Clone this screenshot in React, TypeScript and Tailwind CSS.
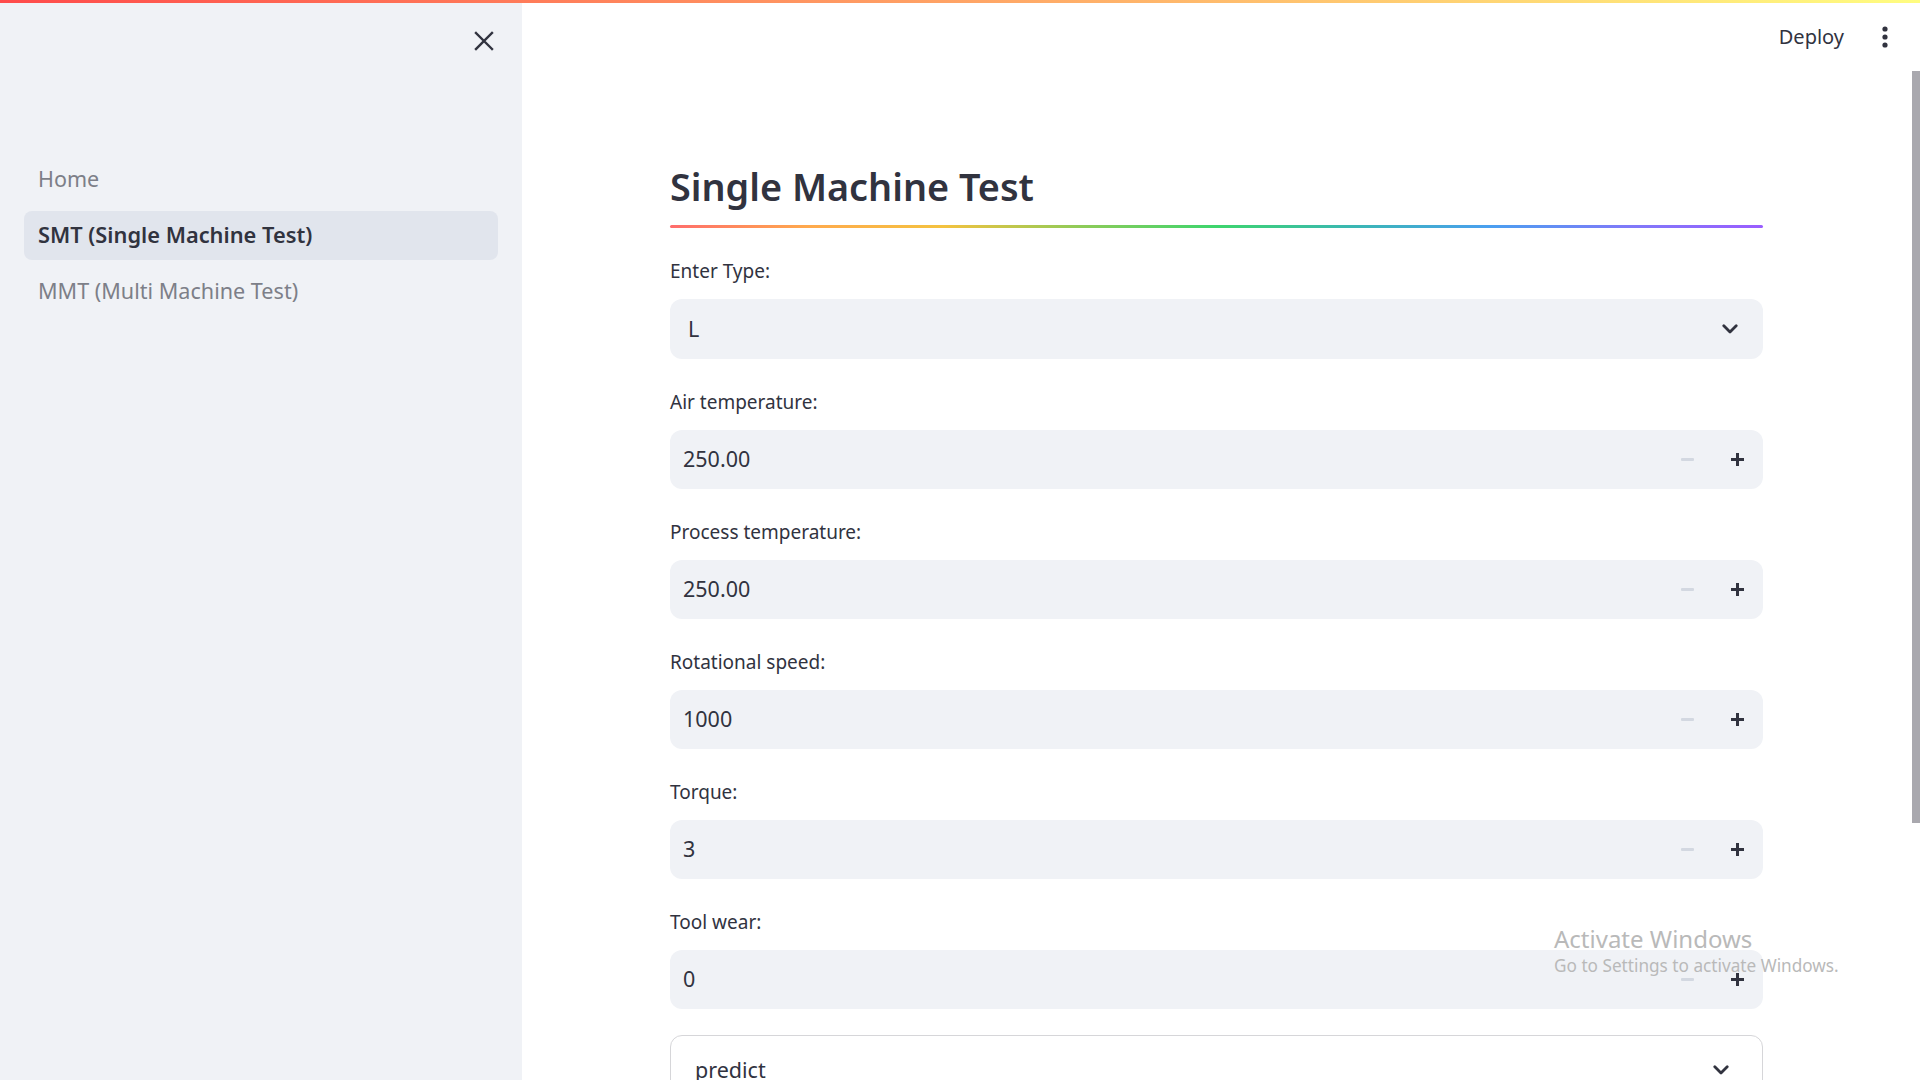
import React from "react";

const Chevron = () => (
  <svg width="16" height="10" viewBox="0 0 16 10" fill="none">
    <path d="M1.8 1.8 L8 8 L14.2 1.8" stroke="#31333f" strokeWidth="2.8" strokeLinecap="round" strokeLinejoin="round" />
  </svg>
);

const NumberInput = ({ label, value }: { label: string; value: string }) => (
  <div className="flex flex-col shrink-0">
    <div className="h-[36px] flex items-center text-[19px] text-[#31333f] mb-[10px]">{label}</div>
    <div className="h-[59px] rounded-[12px] bg-[#f0f2f6] flex items-center">
      <div className="flex-1 pl-[13px] text-[21.5px] text-[#31333f]">{value}</div>
      <div className="w-[50px] h-full flex items-center justify-center">
        <div className="w-[13px] h-[3px] bg-[#d3d8e1] rounded-[1px]" />
      </div>
      <div className="w-[50px] h-full flex items-center justify-center mr-[1px]">
        <svg width="13" height="13" viewBox="0 0 13 13">
          <rect x="0" y="5" width="13" height="3" fill="#31333f" />
          <rect x="5" y="0" width="3" height="13" fill="#31333f" />
        </svg>
      </div>
    </div>
  </div>
);

export default function App() {
  return (
    <div className="relative flex h-screen w-full overflow-hidden bg-white font-['Noto_Sans',sans-serif]">
      <div className="absolute top-0 left-0 right-0 h-[3px] bg-[linear-gradient(90deg,#ff4b4b,#fffd80)] z-10" />

      {/* Sidebar */}
      <aside className="w-[522px] shrink-0 bg-[#f0f2f6] px-[24px] flex flex-col">
        <div className="h-[82px] shrink-0 flex items-center justify-end pr-[4px]">
          <svg width="20" height="20" viewBox="0 0 20 20">
            <path d="M2 2 L18 18 M18 2 L2 18" stroke="#31333f" strokeWidth="2.4" strokeLinecap="square" />
          </svg>
        </div>
        <nav className="mt-[73px] flex flex-col gap-[7px] shrink-0">
          <div className="h-[49px] flex items-center pl-[14px] text-[21.5px] text-[#7d7f88]">Home</div>
          <div className="h-[49px] flex items-center pl-[14px] text-[21.8px] font-semibold text-[#31333f] bg-[#e1e5ed] rounded-[8px]">
            SMT (Single Machine Test)
          </div>
          <div className="h-[49px] flex items-center pl-[14px] text-[21.6px] text-[#7d7f88]">MMT (Multi Machine Test)</div>
        </nav>
      </aside>

      {/* Main */}
      <main className="relative flex-1 flex flex-col">
        <header className="h-[73px] shrink-0 flex items-center justify-end pr-[32px] gap-[41px]">
          <span className="text-[20px] text-[#31333f] mr-[-3px]">Deploy</span>
          <svg width="6" height="22" viewBox="0 0 6 22">
            <circle cx="3" cy="3" r="2.6" fill="#31333f" />
            <circle cx="3" cy="11" r="2.6" fill="#31333f" />
            <circle cx="3" cy="19" r="2.6" fill="#31333f" />
          </svg>
        </header>

        <div className="pl-[148px] w-[1241px] shrink-0">
          <div className="mt-[88px] h-[52px] flex items-center text-[37.8px] font-semibold text-[#31333f] leading-none">
            Single Machine Test
          </div>
          <div className="mt-[12px] h-[3px] rounded-full bg-[linear-gradient(90deg,#ff6c6c,#ffa94d,#f4c23f,#8fcb58,#3dd56d,#3ab7b3,#4a9ff0,#7f7af9,#9a5dff)]" />

          <div className="mt-[25px] flex flex-col gap-[25px]">
            <div className="flex flex-col shrink-0">
              <div className="h-[36px] flex items-center text-[19px] text-[#31333f] mb-[10px]">Enter Type:</div>
              <div className="h-[60px] rounded-[12px] bg-[#f0f2f6] flex items-center justify-between pl-[18px] pr-[25px]">
                <span className="text-[21.5px] text-[#31333f]">L</span>
                <Chevron />
              </div>
            </div>
            <NumberInput label="Air temperature:" value="250.00" />
            <NumberInput label="Process temperature:" value="250.00" />
            <NumberInput label="Rotational speed:" value="1000" />
            <NumberInput label="Torque:" value="3" />
            <NumberInput label="Tool wear:" value="0" />
          </div>

          <div className="mt-[26px] h-[100px] rounded-[12px] border border-[#d6d6d9] flex items-start">
            <div className="h-[68px] w-full flex items-center justify-between pl-[24px] pr-[33px]">
              <span className="text-[21.5px] text-[#31333f]">predict</span>
              <Chevron />
            </div>
          </div>
        </div>

        <div className="absolute right-0 top-[71px] w-[8px] h-[752px] bg-[#a9a8ae]" />

        <div className="absolute left-[1032px] top-[921px] text-[#b9b9b9] pointer-events-none">
          <div className="text-[24px] leading-[36px]">Activate Windows</div>
          <div className="text-[17.2px] leading-[24px] -mt-[3px]">Go to Settings to activate Windows.</div>
        </div>
      </main>
    </div>
  );
}
